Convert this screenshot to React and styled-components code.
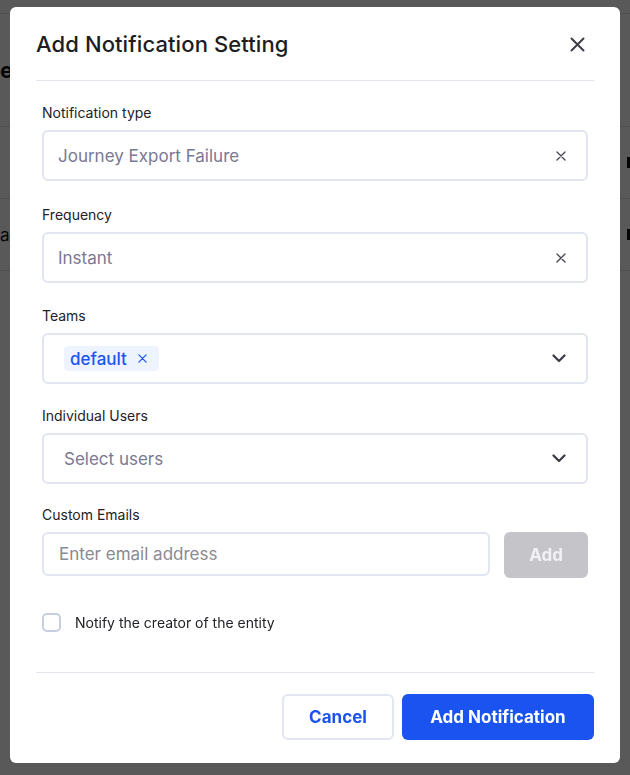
import React from "react"
import styled, { createGlobalStyle } from "styled-components"

const GlobalStyle = createGlobalStyle`
  * { box-sizing: border-box; }
  html, body {
    margin: 0;
    padding: 0;
    font-family: Inter, "Noto Sans", sans-serif;
    overflow: hidden;
  }
`

/* page that sits behind the dialog */
const Page = styled.div`
  width: 630px;
  height: 775px;
  background: #ffffff;
  padding-top: 13px;
  overflow: hidden;
`

const PageRow = styled.div`
  display: flex;
  justify-content: space-between;
  align-items: center;
  height: ${(p) => p.$h}px;
  border-top: 1px solid #e2e2e2;
  font-size: ${(p) => (p.$head ? "22px" : "17px")};
  font-weight: ${(p) => (p.$head ? 700 : 400)};
  color: #111;
`

const RightCell = styled.span`
  width: 3px;
  height: 11px;
  background: #111;
`

const Overlay = styled.div`
  position: fixed;
  inset: 0;
  background: rgba(0, 0, 0, 0.65);
  display: flex;
  justify-content: center;
  align-items: flex-start;
  padding-top: 7px;
`

const Modal = styled.div`
  width: 610px;
  height: 756px;
  background: #fff;
  border-radius: 6px;
  padding: 0 26px;
  display: flex;
  flex-direction: column;
`

const Header = styled.div`
  height: 74px;
  display: flex;
  align-items: center;
  justify-content: space-between;
  border-bottom: 1px solid #e3e5ec;
  padding-top: 1px;
`

const Title = styled.h2`
  margin: 0;
  font-size: 22px;
  font-weight: 500;
  color: #1d1d22;
  letter-spacing: 0.1px;
`

const IconButton = styled.button`
  border: 0;
  background: none;
  padding: 0;
  margin-right: 9px;
  display: flex;
  color: #3f3f4a;
`

const Body = styled.div`
  padding: 22px 6px 0;
  display: flex;
  flex-direction: column;
`

const Field = styled.div`
  margin-bottom: ${(p) => p.$gap || 0}px;
`

const Label = styled.div`
  font-size: 14px;
  line-height: 20px;
  color: #222228;
  margin-bottom: 7px;
`

const SelectBox = styled.div`
  height: 51px;
  border: 2px solid #e2e5ef;
  border-radius: 6px;
  display: flex;
  align-items: center;
  justify-content: space-between;
  padding: 0 20px 0 ${(p) => p.$pad || 14}px;
  font-size: 17px;
  color: #7b7892;
`

const Tag = styled.span`
  display: inline-flex;
  align-items: center;
  gap: 11px;
  height: 25px;
  padding: 0 12px 0 6px;
  background: #eef4ff;
  border-radius: 4px;
  color: #1b55f2;
  font-size: 17px;
  font-weight: 500;
`

const InputRow = styled.div`
  display: flex;
  align-items: flex-start;
  gap: 14px;
`

const TextInput = styled.input`
  flex: 1;
  height: 44px;
  border: 2px solid #e2e5ef;
  border-radius: 6px;
  padding: 0 15px;
  font-family: inherit;
  font-size: 17px;
  color: #333;
  outline: none;
  &::placeholder {
    color: #8a8a90;
  }
`

const AddButton = styled.button`
  width: 84px;
  height: 46px;
  border: 0;
  border-radius: 6px;
  background: #c4c4c9;
  color: #f2f2f6;
  font-family: inherit;
  font-size: 17px;
  font-weight: 700;
`

const CheckRow = styled.label`
  display: flex;
  align-items: center;
  gap: 14px;
  margin-top: 35px;
  font-size: 14px;
  color: #222228;
`

const Checkbox = styled.span`
  width: 19px;
  height: 19px;
  border: 2px solid #c6cee0;
  border-radius: 5px;
`

const Footer = styled.div`
  margin-top: auto;
  border-top: 1px solid #e3e5ec;
  padding: 21px 0 23px;
  display: flex;
  justify-content: flex-end;
  gap: 8px;
`

const Button = styled.button`
  height: 46px;
  width: ${(p) => p.$w}px;
  border-radius: 6px;
  font-family: inherit;
  font-size: 17px;
  font-weight: 700;
  border: ${(p) => (p.$primary ? "0" : "2px solid #e2e6f0")};
  background: ${(p) => (p.$primary ? "#1a53ef" : "#fff")};
  color: ${(p) => (p.$primary ? "#fff" : "#1a53ef")};
`

const XIcon = ({ size = 10, stroke = 1.6, color = "currentColor" }) => (
  <svg width={size} height={size} viewBox="0 0 10 10" fill="none">
    <path d="M1 1L9 9M9 1L1 9" stroke={color} strokeWidth={stroke} strokeLinecap="round" />
  </svg>
)

const Chevron = () => (
  <svg width="14" height="9" viewBox="0 0 14 9" fill="none">
    <path d="M1.5 1.5L7 7L12.5 1.5" stroke="#3a3a45" strokeWidth="2.2" strokeLinecap="round" strokeLinejoin="round" />
  </svg>
)

export default function App() {
  return (
    <>
      <GlobalStyle />
      <Page>
        <PageRow $h={113} $head>
          <span>e</span>
          <span />
        </PageRow>
        <PageRow $h={72}>
          <span />
          <RightCell />
        </PageRow>
        <PageRow $h={72}>
          <span>a</span>
          <RightCell />
        </PageRow>
        <PageRow $h={72} />
      </Page>
      <Overlay>
        <Modal>
          <Header>
            <Title>Add Notification Setting</Title>
            <IconButton>
              <XIcon size={15} stroke={1.35} color="#3f3f4a" />
            </IconButton>
          </Header>
          <Body>
            <Field $gap={24}>
              <Label>Notification type</Label>
              <SelectBox>
                <span>Journey Export Failure</span>
                <XIcon color="#4a4a55" stroke={1.4} />
              </SelectBox>
            </Field>
            <Field $gap={23}>
              <Label>Frequency</Label>
              <SelectBox>
                <span>Instant</span>
                <XIcon color="#4a4a55" stroke={1.4} />
              </SelectBox>
            </Field>
            <Field $gap={22}>
              <Label>Teams</Label>
              <SelectBox $pad={20}>
                <Tag>
                  default
                  <XIcon size={9} stroke={1.4} color="#1b55f2" />
                </Tag>
                <Chevron />
              </SelectBox>
            </Field>
            <Field $gap={21}>
              <Label>Individual Users</Label>
              <SelectBox $pad={20}>
                <span>Select users</span>
                <Chevron />
              </SelectBox>
            </Field>
            <Field>
              <Label>Custom Emails</Label>
              <InputRow>
                <TextInput placeholder="Enter email address" />
                <AddButton>Add</AddButton>
              </InputRow>
            </Field>
            <CheckRow>
              <Checkbox />
              Notify the creator of the entity
            </CheckRow>
          </Body>
          <Footer>
            <Button $w={112}>Cancel</Button>
            <Button $w={192} $primary>Add Notification</Button>
          </Footer>
        </Modal>
      </Overlay>
    </>
  )
}
